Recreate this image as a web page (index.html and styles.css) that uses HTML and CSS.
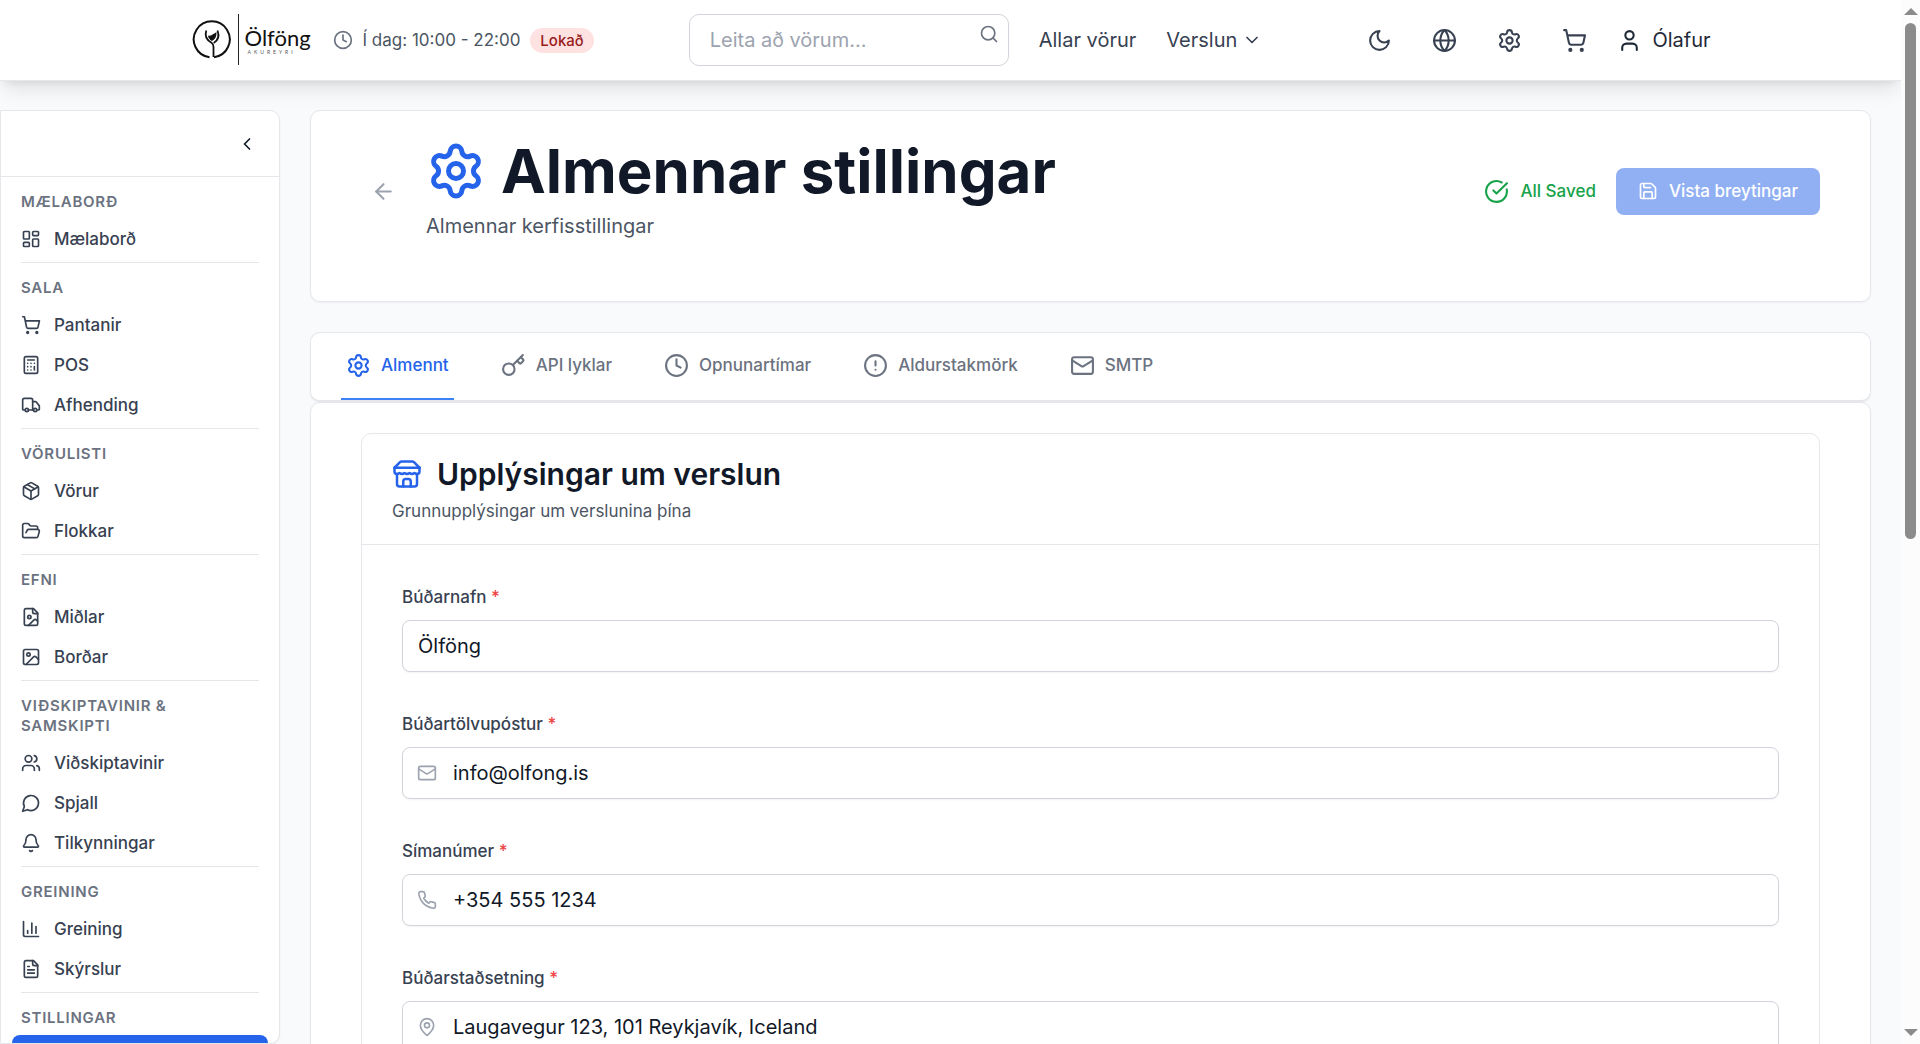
FILE: index.html
```html
<!DOCTYPE html>
<html lang="is">
<head>
<meta charset="utf-8">
<meta name="viewport" content="width=device-width, initial-scale=1">
<title>Almennar stillingar</title>
<link rel="stylesheet" href="styles.css">
</head>
<body>
<svg class="sprite" aria-hidden="true">
  <symbol id="clock" viewBox="0 0 24 24"><circle cx="12" cy="12" r="10"/><path d="M12 6v6l4 2"/></symbol>
  <symbol id="search" viewBox="0 0 24 24"><circle cx="11" cy="11" r="8"/><path d="m21 21-4.3-4.3"/></symbol>
  <symbol id="chevron-down" viewBox="0 0 24 24"><path d="m6 9 6 6 6-6"/></symbol>
  <symbol id="chevron-left" viewBox="0 0 24 24"><path d="m15 18-6-6 6-6"/></symbol>
  <symbol id="moon" viewBox="0 0 24 24"><path d="M12 3a6 6 0 0 0 9 9 9 9 0 1 1-9-9Z"/></symbol>
  <symbol id="globe" viewBox="0 0 24 24"><circle cx="12" cy="12" r="10"/><path d="M12 2a14.5 14.5 0 0 0 0 20 14.5 14.5 0 0 0 0-20"/><path d="M2 12h20"/></symbol>
  <symbol id="settings" viewBox="0 0 24 24"><path d="M9.671 4.136a2.34 2.34 0 0 1 4.659 0 2.34 2.34 0 0 0 3.319 1.915 2.34 2.34 0 0 1 2.33 4.033 2.34 2.34 0 0 0 0 3.831 2.34 2.34 0 0 1-2.33 4.033 2.34 2.34 0 0 0-3.319 1.915 2.34 2.34 0 0 1-4.659 0 2.34 2.34 0 0 0-3.32-1.915 2.34 2.34 0 0 1-2.33-4.033 2.34 2.34 0 0 0 0-3.831A2.34 2.34 0 0 1 6.35 6.051a2.34 2.34 0 0 0 3.319-1.915"/><circle cx="12" cy="12" r="3"/></symbol>
  <symbol id="cart" viewBox="0 0 24 24"><circle cx="8" cy="21" r="1"/><circle cx="19" cy="21" r="1"/><path d="M2.05 2.05h2l2.66 12.42a2 2 0 0 0 2 1.58h9.78a2 2 0 0 0 1.95-1.57l1.65-7.43H5.12"/></symbol>
  <symbol id="user" viewBox="0 0 24 24"><path d="M19 21v-2a4 4 0 0 0-4-4H9a4 4 0 0 0-4 4v2"/><circle cx="12" cy="7" r="4"/></symbol>
  <symbol id="dashboard" viewBox="0 0 24 24"><rect width="7" height="9" x="3" y="3" rx="1"/><rect width="7" height="5" x="14" y="3" rx="1"/><rect width="7" height="9" x="14" y="12" rx="1"/><rect width="7" height="5" x="3" y="16" rx="1"/></symbol>
  <symbol id="calculator" viewBox="0 0 24 24"><rect width="16" height="20" x="4" y="2" rx="2"/><path d="M8 6h8M16 14v4M16 10h.01M12 10h.01M8 10h.01M12 14h.01M8 14h.01M12 18h.01M8 18h.01"/></symbol>
  <symbol id="truck" viewBox="0 0 24 24"><path d="M14 18V6a2 2 0 0 0-2-2H4a2 2 0 0 0-2 2v11a1 1 0 0 0 1 1h2"/><path d="M15 18H9"/><path d="M19 18h2a1 1 0 0 0 1-1v-3.65a1 1 0 0 0-.22-.624l-3.48-4.35A1 1 0 0 0 17.52 8H14"/><circle cx="17" cy="18" r="2"/><circle cx="7" cy="18" r="2"/></symbol>
  <symbol id="package" viewBox="0 0 24 24"><path d="M11 21.73a2 2 0 0 0 2 0l7-4A2 2 0 0 0 21 16V8a2 2 0 0 0-1-1.73l-7-4a2 2 0 0 0-2 0l-7 4A2 2 0 0 0 3 8v8a2 2 0 0 0 1 1.73z"/><path d="M12 22V12"/><path d="M3.29 7 12 12l8.71-5"/><path d="m7.5 4.27 9 5.15"/></symbol>
  <symbol id="folder" viewBox="0 0 24 24"><path d="m6 14 1.5-2.9A2 2 0 0 1 9.24 10H20a2 2 0 0 1 1.94 2.5l-1.54 6a2 2 0 0 1-1.95 1.5H4a2 2 0 0 1-2-2V5a2 2 0 0 1 2-2h3.9a2 2 0 0 1 1.69.9l.81 1.2a2 2 0 0 0 1.67.9H18a2 2 0 0 1 2 2v2"/></symbol>
  <symbol id="file-image" viewBox="0 0 24 24"><path d="M15 2H6a2 2 0 0 0-2 2v16a2 2 0 0 0 2 2h12a2 2 0 0 0 2-2V7Z"/><path d="M14 2v4a2 2 0 0 0 2 2h4"/><circle cx="10" cy="12" r="2"/><path d="m20 17-1.296-1.296a2.41 2.41 0 0 0-3.408 0L9 22"/></symbol>
  <symbol id="image" viewBox="0 0 24 24"><rect width="18" height="18" x="3" y="3" rx="2"/><circle cx="9" cy="9" r="2"/><path d="m21 15-3.086-3.086a2 2 0 0 0-2.828 0L6 21"/></symbol>
  <symbol id="users" viewBox="0 0 24 24"><path d="M16 21v-2a4 4 0 0 0-4-4H6a4 4 0 0 0-4 4v2"/><circle cx="9" cy="7" r="4"/><path d="M22 21v-2a4 4 0 0 0-3-3.87"/><path d="M16 3.13a4 4 0 0 1 0 7.75"/></symbol>
  <symbol id="message" viewBox="0 0 24 24"><path d="M7.9 20A9 9 0 1 0 4 16.1L2 22Z"/></symbol>
  <symbol id="bell" viewBox="0 0 24 24"><path d="M10.268 21a2 2 0 0 0 3.464 0"/><path d="M3.262 15.326A1 1 0 0 0 4 17h16a1 1 0 0 0 .74-1.673C19.41 13.956 18 12.499 18 8A6 6 0 0 0 6 8c0 4.499-1.411 5.956-2.738 7.326"/></symbol>
  <symbol id="chart" viewBox="0 0 24 24"><path d="M3 3v16a2 2 0 0 0 2 2h16"/><path d="M18 17V9"/><path d="M13 17V5"/><path d="M8 17v-3"/></symbol>
  <symbol id="file-text" viewBox="0 0 24 24"><path d="M15 2H6a2 2 0 0 0-2 2v16a2 2 0 0 0 2 2h12a2 2 0 0 0 2-2V7Z"/><path d="M14 2v4a2 2 0 0 0 2 2h4"/><path d="M10 9H8M16 13H8M16 17H8"/></symbol>
  <symbol id="arrow-left" viewBox="0 0 24 24"><path d="m12 19-7-7 7-7"/><path d="M19 12H5"/></symbol>
  <symbol id="check-circle" viewBox="0 0 24 24"><path d="M21.801 10A10 10 0 1 1 17 3.335"/><path d="m9 11 3 3L22 4"/></symbol>
  <symbol id="save" viewBox="0 0 24 24"><path d="M15.2 3a2 2 0 0 1 1.4.6l3.8 3.8a2 2 0 0 1 .6 1.4V19a2 2 0 0 1-2 2H5a2 2 0 0 1-2-2V5a2 2 0 0 1 2-2z"/><path d="M17 21v-7a1 1 0 0 0-1-1H8a1 1 0 0 0-1 1v7"/><path d="M7 3v4a1 1 0 0 0 1 1h7"/></symbol>
  <symbol id="key" viewBox="0 0 24 24"><path d="m15.5 7.5 2.3 2.3a1 1 0 0 0 1.4 0l2.1-2.1a1 1 0 0 0 0-1.4L19 4"/><path d="m21 2-9.6 9.6"/><circle cx="7.5" cy="15.5" r="5.5"/></symbol>
  <symbol id="alert" viewBox="0 0 24 24"><circle cx="12" cy="12" r="10"/><path d="M12 8v4M12 16h.01"/></symbol>
  <symbol id="mail" viewBox="0 0 24 24"><rect width="20" height="16" x="2" y="4" rx="2"/><path d="m22 7-8.97 5.7a1.94 1.94 0 0 1-2.06 0L2 7"/></symbol>
  <symbol id="store" viewBox="0 0 24 24"><path d="m2 7 4.41-4.41A2 2 0 0 1 7.83 2h8.34a2 2 0 0 1 1.42.59L22 7"/><path d="M4 12v8a2 2 0 0 0 2 2h12a2 2 0 0 0 2-2v-8"/><path d="M15 22v-4a2 2 0 0 0-2-2h-2a2 2 0 0 0-2 2v4"/><path d="M2 7h20"/><path d="M22 7v3a2 2 0 0 1-2 2a2.7 2.7 0 0 1-1.59-.63.7.7 0 0 0-.82 0A2.7 2.7 0 0 1 16 12a2.7 2.7 0 0 1-1.59-.63.7.7 0 0 0-.82 0A2.7 2.7 0 0 1 12 12a2.7 2.7 0 0 1-1.59-.63.7.7 0 0 0-.82 0A2.7 2.7 0 0 1 8 12a2.7 2.7 0 0 1-1.59-.63.7.7 0 0 0-.82 0A2.7 2.7 0 0 1 4 12a2 2 0 0 1-2-2V7"/></symbol>
  <symbol id="phone" viewBox="0 0 24 24"><path d="M22 16.92v3a2 2 0 0 1-2.18 2 19.79 19.79 0 0 1-8.63-3.07 19.5 19.5 0 0 1-6-6 19.79 19.79 0 0 1-3.07-8.67A2 2 0 0 1 4.11 2h3a2 2 0 0 1 2 1.72 12.84 12.84 0 0 0 .7 2.81 2 2 0 0 1-.45 2.11L8.09 9.91a16 16 0 0 0 6 6l1.27-1.27a2 2 0 0 1 2.11-.45 12.84 12.84 0 0 0 2.81.7A2 2 0 0 1 22 16.92z"/></symbol>
  <symbol id="pin" viewBox="0 0 24 24"><path d="M20 10c0 4.993-5.539 10.193-7.399 11.799a1 1 0 0 1-1.202 0C9.539 20.193 4 14.993 4 10a8 8 0 0 1 16 0"/><circle cx="12" cy="10" r="3"/></symbol>
</svg>

<div class="window">
  <div class="page">
    <header class="topbar">
      <div class="topbar-inner">
        <div class="brand-group">
          <a class="logo" href="#" aria-label="Ölföng Akureyri">
            <svg class="logo-mark" width="52" height="52" viewBox="1 0 52 52" aria-hidden="true">
              <path d="M24 43.2A18 18 0 1 0 19.500 43.200" fill="none" stroke="#111" stroke-width="2"/>
              <path d="M23.500 43V33c0-2.500-.6-3.300-2-4.200-5.500-3.200-7-7-5.200-12.300" fill="none" stroke="#111" stroke-width="1.800"/>
              <path d="M27.500 16.500c2.200 6 .5 10-3.800 12.500" fill="none" stroke="#111" stroke-width="1.800"/>
              <path d="M18 21.500c1.600.8 3 .2 4.200-.8 1.400-1.100 3-1.500 4.300-2.700.3 4.500-1.500 7.500-4.500 9-2.500-1.300-3.800-3.200-4-5.500z" fill="#111"/>
              <path d="M48.500 0v51" stroke="#222" stroke-width="1"/>
            </svg>
            <span class="wordmark"><span class="wordmark-name">Ölföng</span><span class="wordmark-town">AKUREYRI</span></span>
          </a>
          <div class="hours">
            <svg class="icon i20"><use href="#clock"/></svg>
            <span>Í dag: 10:00 - 22:00</span>
            <span class="badge">Lokað</span>
          </div>
        </div>
        <nav class="site-nav">
          <div class="search">
            <input class="search-input" type="text" placeholder="Leita að vörum..." aria-label="Leita að vörum">
            <button class="search-button" type="button" aria-label="Leita"><svg class="icon i20"><use href="#search"/></svg></button>
          </div>
          <a class="nav-link" href="#">Allar vörur</a>
          <button class="nav-link" type="button">Verslun <svg class="icon i20"><use href="#chevron-down"/></svg></button>
        </nav>
        <div class="tools">
          <button class="tool" type="button" aria-label="Dökkt þema"><svg class="icon i25"><use href="#moon"/></svg></button>
          <button class="tool" type="button" aria-label="Tungumál"><svg class="icon i25"><use href="#globe"/></svg></button>
          <a class="tool" href="#" aria-label="Stillingar"><svg class="icon i25"><use href="#settings"/></svg></a>
          <a class="tool" href="#" aria-label="Karfa"><svg class="icon i25"><use href="#cart"/></svg></a>
          <button class="account" type="button"><svg class="icon i25"><use href="#user"/></svg>Ólafur</button>
        </div>
      </div>
    </header>

    <div class="layout">
      <aside class="sidebar">
        <div class="sidebar-head">
          <button class="collapse" type="button" aria-label="Fella saman"><svg class="icon i20"><use href="#chevron-left"/></svg></button>
        </div>
        <nav class="menu">
          <section class="menu-group">
            <h2 class="menu-title">MÆLABORÐ</h2>
            <a class="menu-item" href="#"><svg class="icon i20"><use href="#dashboard"/></svg>Mælaborð</a>
          </section>
          <section class="menu-group">
            <h2 class="menu-title">SALA</h2>
            <a class="menu-item" href="#"><svg class="icon i20"><use href="#cart"/></svg>Pantanir</a>
            <a class="menu-item" href="#"><svg class="icon i20"><use href="#calculator"/></svg>POS</a>
            <a class="menu-item" href="#"><svg class="icon i20"><use href="#truck"/></svg>Afhending</a>
          </section>
          <section class="menu-group">
            <h2 class="menu-title">VÖRULISTI</h2>
            <a class="menu-item" href="#"><svg class="icon i20"><use href="#package"/></svg>Vörur</a>
            <a class="menu-item" href="#"><svg class="icon i20"><use href="#folder"/></svg>Flokkar</a>
          </section>
          <section class="menu-group">
            <h2 class="menu-title">EFNI</h2>
            <a class="menu-item" href="#"><svg class="icon i20"><use href="#file-image"/></svg>Miðlar</a>
            <a class="menu-item" href="#"><svg class="icon i20"><use href="#image"/></svg>Borðar</a>
          </section>
          <section class="menu-group">
            <h2 class="menu-title">VIÐSKIPTAVINIR &amp; SAMSKIPTI</h2>
            <a class="menu-item" href="#"><svg class="icon i20"><use href="#users"/></svg>Viðskiptavinir</a>
            <a class="menu-item" href="#"><svg class="icon i20"><use href="#message"/></svg>Spjall</a>
            <a class="menu-item" href="#"><svg class="icon i20"><use href="#bell"/></svg>Tilkynningar</a>
          </section>
          <section class="menu-group">
            <h2 class="menu-title">GREINING</h2>
            <a class="menu-item" href="#"><svg class="icon i20"><use href="#chart"/></svg>Greining</a>
            <a class="menu-item" href="#"><svg class="icon i20"><use href="#file-text"/></svg>Skýrslur</a>
          </section>
          <section class="menu-group">
            <h2 class="menu-title">STILLINGAR</h2>
            <a class="menu-item menu-item-active" href="#" aria-label="Almennar stillingar" aria-current="page"></a>
          </section>
        </nav>
      </aside>

      <main class="main">
        <section class="card page-head">
          <div class="page-head-left">
            <a class="back" href="#" aria-label="Til baka"><svg class="icon i25"><use href="#arrow-left"/></svg></a>
            <div>
              <h1 class="page-title"><svg class="icon i60"><use href="#settings"/></svg>Almennar stillingar</h1>
              <p class="page-subtitle">Almennar kerfisstillingar</p>
            </div>
          </div>
          <div class="page-actions">
            <span class="saved"><svg class="icon i25"><use href="#check-circle"/></svg>All Saved</span>
            <button class="save" type="submit" form="store-form" disabled><svg class="icon i20"><use href="#save"/></svg>Vista breytingar</button>
          </div>
        </section>

        <nav class="card tabs">
          <a class="tab tab-active" href="#" aria-current="true"><svg class="icon i25"><use href="#settings"/></svg>Almennt</a>
          <a class="tab" href="#"><svg class="icon i25"><use href="#key"/></svg>API lyklar</a>
          <a class="tab" href="#"><svg class="icon i25"><use href="#clock"/></svg>Opnunartímar</a>
          <a class="tab" href="#"><svg class="icon i25"><use href="#alert"/></svg>Aldurstakmörk</a>
          <a class="tab" href="#"><svg class="icon i25"><use href="#mail"/></svg>SMTP</a>
        </nav>

        <div class="card panel">
          <section class="store">
            <header class="store-head">
              <h2 class="store-title"><svg class="icon i30"><use href="#store"/></svg>Upplýsingar um verslun</h2>
              <p class="store-subtitle">Grunnupplýsingar um verslunina þína</p>
            </header>
            <form class="store-form" id="store-form">
              <div class="field">
                <label class="label" for="name">Búðarnafn <span class="required">*</span></label>
                <input class="input" id="name" type="text" value="Ölföng">
              </div>
              <div class="field">
                <label class="label" for="email">Búðartölvupóstur <span class="required">*</span></label>
                <div class="input-wrap">
                  <svg class="icon i20 input-icon"><use href="#mail"/></svg>
                  <input class="input input-with-icon" id="email" type="email" value="info@olfong.is">
                </div>
              </div>
              <div class="field">
                <label class="label" for="phone-number">Símanúmer <span class="required">*</span></label>
                <div class="input-wrap">
                  <svg class="icon i20 input-icon"><use href="#phone"/></svg>
                  <input class="input input-with-icon" id="phone-number" type="tel" value="+354 555 1234">
                </div>
              </div>
              <div class="field">
                <label class="label" for="address">Búðarstaðsetning <span class="required">*</span></label>
                <div class="input-wrap">
                  <svg class="icon i20 input-icon"><use href="#pin"/></svg>
                  <input class="input input-with-icon" id="address" type="text" value="Laugavegur 123, 101 Reykjavík, Iceland">
                </div>
              </div>
            </form>
          </section>
        </div>
      </main>
    </div>
  </div>
  <div class="scrollbar" aria-hidden="true">
    <span class="arrow arrow-up"></span>
    <span class="track"><span class="thumb"></span></span>
    <span class="arrow arrow-down"></span>
  </div>
</div>
</body>
</html>
```
FILE: styles.css
```css
*, *::before, *::after { box-sizing: border-box; }
body {
  margin: 0;
  font-family: Inter, "Liberation Sans", sans-serif;
  font-size: 20px;
  line-height: 30px;
  color: #111827;
  background: #f9fafb;
}
h1, h2, p { margin: 0; }
a { color: inherit; text-decoration: none; }
button { border: 0; padding: 0; background: none; color: inherit; font: inherit; }

.sprite { display: none; }
.icon {
  flex: none;
  display: block;
  fill: none;
  stroke: currentColor;
  stroke-width: 2;
  stroke-linecap: round;
  stroke-linejoin: round;
}
.i20 { width: 20px; height: 20px; }
.i25 { width: 25px; height: 25px; }
.i30 { width: 30px; height: 30px; }
.i60 { width: 60px; height: 60px; }

.window { display: flex; height: 100vh; }
.page { flex: 1; min-width: 0; display: flex; flex-direction: column; overflow: hidden; }

/* Top bar */
.topbar {
  position: relative;
  z-index: 2;
  flex: none;
  background: #fff;
  border-bottom: 1px solid #e5e7eb;
  box-shadow: 0 12px 19px -4px rgba(0, 0, 0, .1), 0 5px 8px -5px rgba(0, 0, 0, .1);
}
.topbar-inner {
  display: flex;
  align-items: center;
  justify-content: space-between;
  max-width: 1600px;
  height: 80px;
  margin: 0 auto;
  padding: 0 40px;
}
.brand-group, .hours, .site-nav, .tools, .account, .logo { display: flex; align-items: center; }
.brand-group { gap: 20px; }
.logo { width: 122px; gap: 2px; color: #111; }
.logo-mark { flex: none; }
.wordmark { display: flex; flex-direction: column; font-family: Lato, sans-serif; }
.wordmark-name { font-size: 22px; line-height: 24px; }
.wordmark-town { padding-left: 3px; font-size: 5px; line-height: 4px; letter-spacing: 3px; color: #555; }
.hours { gap: 10px; font-size: 17px; line-height: 25px; color: #4b5563; }
.hours .icon { color: #6b7280; }
.badge {
  padding: 0 10px;
  border-radius: 13px;
  background: #fee2e2;
  color: #991b1b;
  font-size: 15px;
  font-weight: 500;
}
.site-nav { gap: 30px; color: #374151; }
.search { position: relative; }
.search-input {
  display: block;
  width: 320px;
  height: 52px;
  padding: 0 50px 0 20px;
  border: 1px solid #d1d5db;
  border-radius: 10px;
  background: #fff;
  font: inherit;
}
.search-input::placeholder { color: #9ca3af; opacity: 1; }
.search-button { position: absolute; top: 10px; right: 10px; color: #6b7280; }
.nav-link { display: flex; align-items: center; gap: 5px; }
.tools { gap: 20px; color: #374151; }
.tool { padding: 10px; }
.account { gap: 10px; color: #1f2937; }

/* Layout */
.layout { flex: 1; min-height: 0; display: flex; }
.sidebar {
  flex: none;
  width: 280px;
  margin-top: 29px;
  overflow: hidden;
  border: 1px solid #e5e7eb;
  border-radius: 0 10px 10px 0;
  background: #fff;
  box-shadow: 0 1px 2px rgba(0, 0, 0, .05);
}
.sidebar-head {
  display: flex;
  align-items: center;
  justify-content: flex-end;
  height: 66px;
  padding: 0 20px;
  border-bottom: 1px solid #e5e7eb;
}
.collapse { padding: 2px; }
.menu { padding: 0 11px; font-weight: 500; color: #374151; }
.menu-group { padding-bottom: 3px; }
.menu-group::after { content: ""; display: block; height: 1px; margin: 3px 9px -3px; background: #e5e7eb; }
.menu-title {
  padding: 15px 9px 7px;
  font-size: 15px;
  line-height: 20px;
  font-weight: 600;
  letter-spacing: .05em;
  color: #6b7280;
}
.menu-item {
  display: flex;
  align-items: center;
  gap: 13px;
  height: 40px;
  padding: 0 9px;
  border-radius: 8px;
  font-size: 17px;
  line-height: 25px;
}
.menu-item-active { background: #2563eb; }

.main {
  flex: 1;
  min-width: 0;
  overflow-y: auto;
  scrollbar-width: none;
  padding: 29px 30px;
}
.card {
  border: 1px solid #e5e7eb;
  border-radius: 10px;
  background: #fff;
  box-shadow: 0 1px 2px rgba(0, 0, 0, .05);
}

/* Page heading */
.page-head {
  display: flex;
  align-items: center;
  justify-content: space-between;
  margin-bottom: 30px;
  padding: 30px 50px 60px;
}
.page-head-left, .page-actions, .page-title, .saved, .save { display: flex; align-items: center; }
.page-head-left { gap: 20px; }
.back { padding: 10px; color: #9ca3af; }
.page-title { gap: 15px; margin-bottom: 10px; font-size: 60px; line-height: 60px; font-weight: 700; }
.page-title .icon, .store-title .icon { color: #2563eb; }
.page-subtitle { color: #4b5563; }
.page-actions { gap: 20px; font-size: 17px; line-height: 25px; font-weight: 500; }
.saved { gap: 11px; color: #16a34a; }
.save { gap: 11px; padding: 11px 22px; border-radius: 8px; background: #2563eb; color: #fff; opacity: .5; }

/* Tabs */
.tabs { display: flex; gap: 42px; padding: 0 30px; border-bottom-width: 2px; }
.tab {
  display: flex;
  align-items: center;
  gap: 10px;
  padding: 20px 5px;
  border-bottom: 2px solid transparent;
  font-size: 17px;
  line-height: 25px;
  font-weight: 500;
  color: #6b7280;
}
.tab-active { border-color: #3b82f6; color: #2563eb; }

/* Store panel */
.panel { padding: 30px 50px; }
.store { border: 1px solid #e5e7eb; border-radius: 10px; }
.store-head { padding: 20px 30px; border-bottom: 1px solid #e5e7eb; }
.store-title { display: flex; align-items: center; gap: 15px; margin-bottom: 5px; font-size: 30px; line-height: 40px; font-weight: 600; }
.store-subtitle { font-size: 17px; line-height: 25px; color: #4b5563; }
.store-form { display: flex; flex-direction: column; gap: 40px; padding: 40px; }
.field { display: flex; flex-direction: column; gap: 10px; }
.label { font-size: 17px; line-height: 25px; font-weight: 500; color: #374151; }
.required { color: #ef4444; }
.input-wrap { position: relative; }
.input {
  display: block;
  width: 100%;
  height: 52px;
  padding: 0 15px;
  border: 1px solid #d1d5db;
  border-radius: 8px;
  background: #fff;
  box-shadow: 0 1px 2px rgba(0, 0, 0, .05);
  color: #111827;
  font: inherit;
}
.input-with-icon { padding-left: 50px; }
.input-icon { position: absolute; top: 16px; left: 15px; color: #9ca3af; }

/* Scrollbar gutter */
.scrollbar {
  flex: none;
  display: flex;
  flex-direction: column;
  align-items: center;
  width: 19px;
  padding: 8px 0;
  background: #fcfcfc;
}
.arrow { border: 7px solid transparent; }
.arrow-up { border-top: 0; border-bottom-color: #8b8b8b; }
.arrow-down { border-bottom: 0; border-top-color: #8b8b8b; }
.track { flex: 1; width: 11px; padding: 8px 0 14px; }
.thumb { display: block; height: 52%; border-radius: 6px; background: #8b8b8b; }
```
